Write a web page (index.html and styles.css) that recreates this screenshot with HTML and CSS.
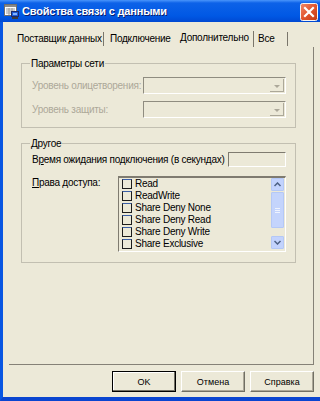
FILE: index.html
```html
<!DOCTYPE HTML>
<html>
  <head>
    <title>Свойства связи с данными</title>
    <meta charset="utf-8" />
    <link rel="stylesheet" href="styles.css">
  </head>
  <body>
    <div class="window">
      <div class="titlebar">
        <svg class="app-icon" width="15" height="15" viewBox="0 0 15 15">
          <rect x="0.5" y="0.5" width="12" height="11" fill="#fff" stroke="#6f6f6f"/>
          <rect x="1" y="1" width="11" height="2" fill="#8a8a8a"/>
          <path d="M2 5h9M2 7h9M2 9h5M5 4v7M8 4v4" stroke="#9a9a9a" stroke-width="1"/>
          <rect x="7.5" y="7.5" width="7" height="5" fill="#1d5bd6" stroke="#1a2a6a"/>
          <rect x="9" y="9" width="4" height="2" fill="#7fb2ff"/>
          <rect x="8" y="13" width="6" height="2" fill="#3b3b3b"/>
        </svg>
        <span class="title">Свойства связи с данными</span>
        <div class="spacer"></div>
        <svg class="close" width="18" height="18" viewBox="0 0 18 18">
          <defs>
            <linearGradient id="cg" x1="0" y1="0" x2="1" y2="1">
              <stop offset="0" stop-color="#f08a6a"/>
              <stop offset="0.5" stop-color="#e2552e"/>
              <stop offset="1" stop-color="#c13a12"/>
            </linearGradient>
          </defs>
          <rect x="0.5" y="0.5" width="17" height="17" rx="2" fill="url(#cg)" stroke="#f4f4f4"/>
          <path d="M5 5l8 8M13 5l-8 8" stroke="#fff" stroke-width="2.2" stroke-linecap="square"/>
        </svg>
      </div>
      <div class="frame">
        <div class="tabs">
          <div class="tab tab-1">Поставщик данных</div>
          <div class="tab tab-2">Подключение</div>
          <div class="tab tab-3 active">Дополнительно</div>
          <div class="tab tab-4">Все</div>
        </div>
        <div class="pane">
          <fieldset class="group group-net">
            <legend>Параметры сети</legend>
            <div class="row disabled">
              <span>Уровень олицетворения:</span>
              <div class="combo"><span class="combo-btn"><i></i></span></div>
            </div>
            <div class="row disabled">
              <span>Уровень защиты:</span>
              <div class="combo"><span class="combo-btn"><i></i></span></div>
            </div>
          </fieldset>
          <fieldset class="group group-other">
            <legend>Другое</legend>
            <div class="row">
              <span>В<u>р</u>емя ожидания подключения (в секундах)</span>
              <div class="edit"></div>
            </div>
            <div class="row row-list">
              <span><u>П</u>рава доступа:</span>
              <div class="listbox">
                <ul class="items">
                  <li><span class="check"></span>Read</li>
                  <li><span class="check"></span>ReadWrite</li>
                  <li><span class="check"></span>Share Deny None</li>
                  <li><span class="check"></span>Share Deny Read</li>
                  <li><span class="check"></span>Share Deny Write</li>
                  <li><span class="check"></span>Share Exclusive</li>
                </ul>
                <div class="scrollbar">
                  <div class="sb-btn">
                    <svg width="7" height="5" viewBox="0 0 7 5"><path d="M0.5 4L3.5 1L6.5 4" fill="none" stroke="#4d6185" stroke-width="1.5"/></svg>
                  </div>
                  <div class="sb-thumb"><span></span><span></span><span></span></div>
                  <div class="sb-track"></div>
                  <div class="sb-btn">
                    <svg width="7" height="5" viewBox="0 0 7 5"><path d="M0.5 1L3.5 4L6.5 1" fill="none" stroke="#4d6185" stroke-width="1.5"/></svg>
                  </div>
                </div>
              </div>
            </div>
          </fieldset>
        </div>
        <div class="buttons">
          <button class="default">OK</button>
          <button>Отмена</button>
          <button>Справка</button>
        </div>
      </div>
    </div>
  </body>
</html>
```

FILE: styles.css
```css
body {
  margin: 0;
  font-family: "Liberation Sans", Arial, sans-serif;
  font-size: 10px;
  letter-spacing: -0.25px;
  color: #000;
}
.window {
  width: 320px;
  height: 401px;
  display: flex;
  flex-direction: column;
  background: #ece9d8;
  overflow: hidden;
}
.titlebar {
  height: 22px;
  flex: none;
  display: flex;
  align-items: center;
  padding: 0 2px 0 4px;
  background: linear-gradient(to bottom, #4a95fb 0, #0d62e8 3px, #0058e4 16px, #0049d2 22px);
}
.app-icon {
  flex: none;
  margin-right: 3px;
}
.title {
  color: #fff;
  font-weight: bold;
  font-size: 11px;
  letter-spacing: -0.2px;
  text-shadow: 1px 1px #0a1e6e;
  white-space: nowrap;
}
.titlebar .spacer {
  flex: 1;
}
.close {
  flex: none;
  margin-top: 1px;
}
.frame {
  flex: 1;
  display: flex;
  flex-direction: column;
  border-left: 3px solid #0856e2;
  border-bottom: 4px solid #0a45d0;
  padding: 8px 6px 0 6px;
}
.tabs {
  height: 17px;
  display: flex;
  align-items: flex-end;
}
.tab {
  flex: none;
  height: 14px;
  line-height: 14px;
  margin-bottom: 1px;
  white-space: nowrap;
  box-sizing: border-box;
}
.tab-1 {
  width: 95px;
  padding-left: 8px;
  border-right: 1px solid #7a766b;
}
.tab-2 {
  width: 72px;
  padding-left: 6px;
}
.tab-3 {
  width: 78px;
  padding-left: 4px;
  border-right: 1px solid #7a766b;
}
.tab.active {
  height: 16px;
  line-height: 13px;
  margin-bottom: 0;
}
.tab-4 {
  width: 34px;
  padding-left: 4px;
  border-right: 1px solid #7a766b;
}
.pane {
  width: 305px;
  height: 318px;
  box-sizing: border-box;
  border-right: 1px solid #858177;
  border-bottom: 1px solid #858177;
  padding-top: 10px;
}
.group {
  margin: 0 0 0 12px;
  width: 275px;
  box-sizing: border-box;
  border: 1px solid #c2bfb1;
  padding: 0 9px 0 10px;
  min-width: 0;
}
.group legend {
  margin-left: -2px;
  padding: 0 1px;
  line-height: 13px;
}
.group-net {
  padding-top: 7px;
  padding-bottom: 9px;
}
.group-other {
  margin-top: 9px;
  padding-top: 2px;
  padding-bottom: 10px;
}
.row {
  display: flex;
  align-items: center;
  justify-content: space-between;
  white-space: nowrap;
}
.row + .row {
  margin-top: 7px;
}
.row.disabled {
  color: #aca899;
}
.row-list {
  align-items: flex-start;
  margin-top: 9px !important;
}
.row-list > span {
  line-height: 13px;
}
.combo {
  width: 143px;
  height: 17px;
  box-sizing: border-box;
  border-top: 1px solid #8f8c80;
  border-left: 1px solid #8f8c80;
  border-right: 1px solid #fff;
  border-bottom: 1px solid #fff;
  display: flex;
  justify-content: flex-end;
  padding: 1px;
}
.combo-btn {
  width: 14px;
  box-sizing: border-box;
  border-right: 1px solid #aca899;
  border-bottom: 1px solid #aca899;
  display: flex;
  align-items: center;
  justify-content: center;
}
.combo-btn i {
  width: 0;
  height: 0;
  border-left: 3px solid transparent;
  border-right: 3px solid transparent;
  border-top: 3px solid #aca899;
  margin-top: 3px;
}
.edit {
  width: 58px;
  height: 15px;
  box-sizing: border-box;
  border-top: 1px solid #7f7b70;
  border-left: 1px solid #7f7b70;
  border-right: 1px solid #fff;
  border-bottom: 1px solid #fff;
}
.listbox {
  width: 168px;
  height: 76px;
  box-sizing: border-box;
  border-top: 2px solid #7f7b70;
  border-left: 1px solid #7f7b70;
  border-right: 1px solid #fff;
  border-bottom: 1px solid #fff;
  display: flex;
}
.items {
  flex: 1;
  list-style: none;
  margin: 0;
  padding: 0 0 0 3px;
  overflow: hidden;
}
.items li {
  height: 12px;
  line-height: 12px;
  display: flex;
  align-items: center;
  white-space: nowrap;
}
.check {
  width: 10px;
  height: 10px;
  box-sizing: border-box;
  border: 1px solid #1c1c1c;
  border-top-color: #3a5fa8;
  margin-right: 3px;
  flex: none;
}
.scrollbar {
  width: 13px;
  display: flex;
  flex-direction: column;
  padding: 0 1px 2px 0;
}
.sb-btn {
  height: 13px;
  box-sizing: border-box;
  background: #c3d3fd;
  border: 1px solid #b4c8f6;
  border-radius: 1px;
  display: flex;
  align-items: center;
  justify-content: center;
}
.sb-thumb {
  height: 36px;
  margin-top: 1px;
  box-sizing: border-box;
  background: #c4d4fc;
  border: 1px solid #b4c8f6;
  border-radius: 1px;
  display: flex;
  flex-direction: column;
  align-items: center;
  justify-content: center;
  gap: 1px;
}
.sb-thumb span {
  width: 5px;
  height: 1px;
  background: #eef3ff;
}
.sb-track {
  flex: 1;
}
.buttons {
  margin-top: 6px;
  display: flex;
  justify-content: flex-end;
  gap: 5px;
}
.buttons button {
  width: 64px;
  height: 21px;
  box-sizing: border-box;
  font-family: "Liberation Sans", Arial, sans-serif;
  font-size: 9px;
  color: #000;
  background: #ece9d8;
  border: 1px solid;
  border-color: #fff #716f64 #716f64 #fff;
  box-shadow: inset -1px -1px #aca899;
  padding: 0;
}
.buttons button.default {
  border-color: #000;
  box-shadow: inset -1px -1px #716f64, inset 1px 1px #fff;
}
```
